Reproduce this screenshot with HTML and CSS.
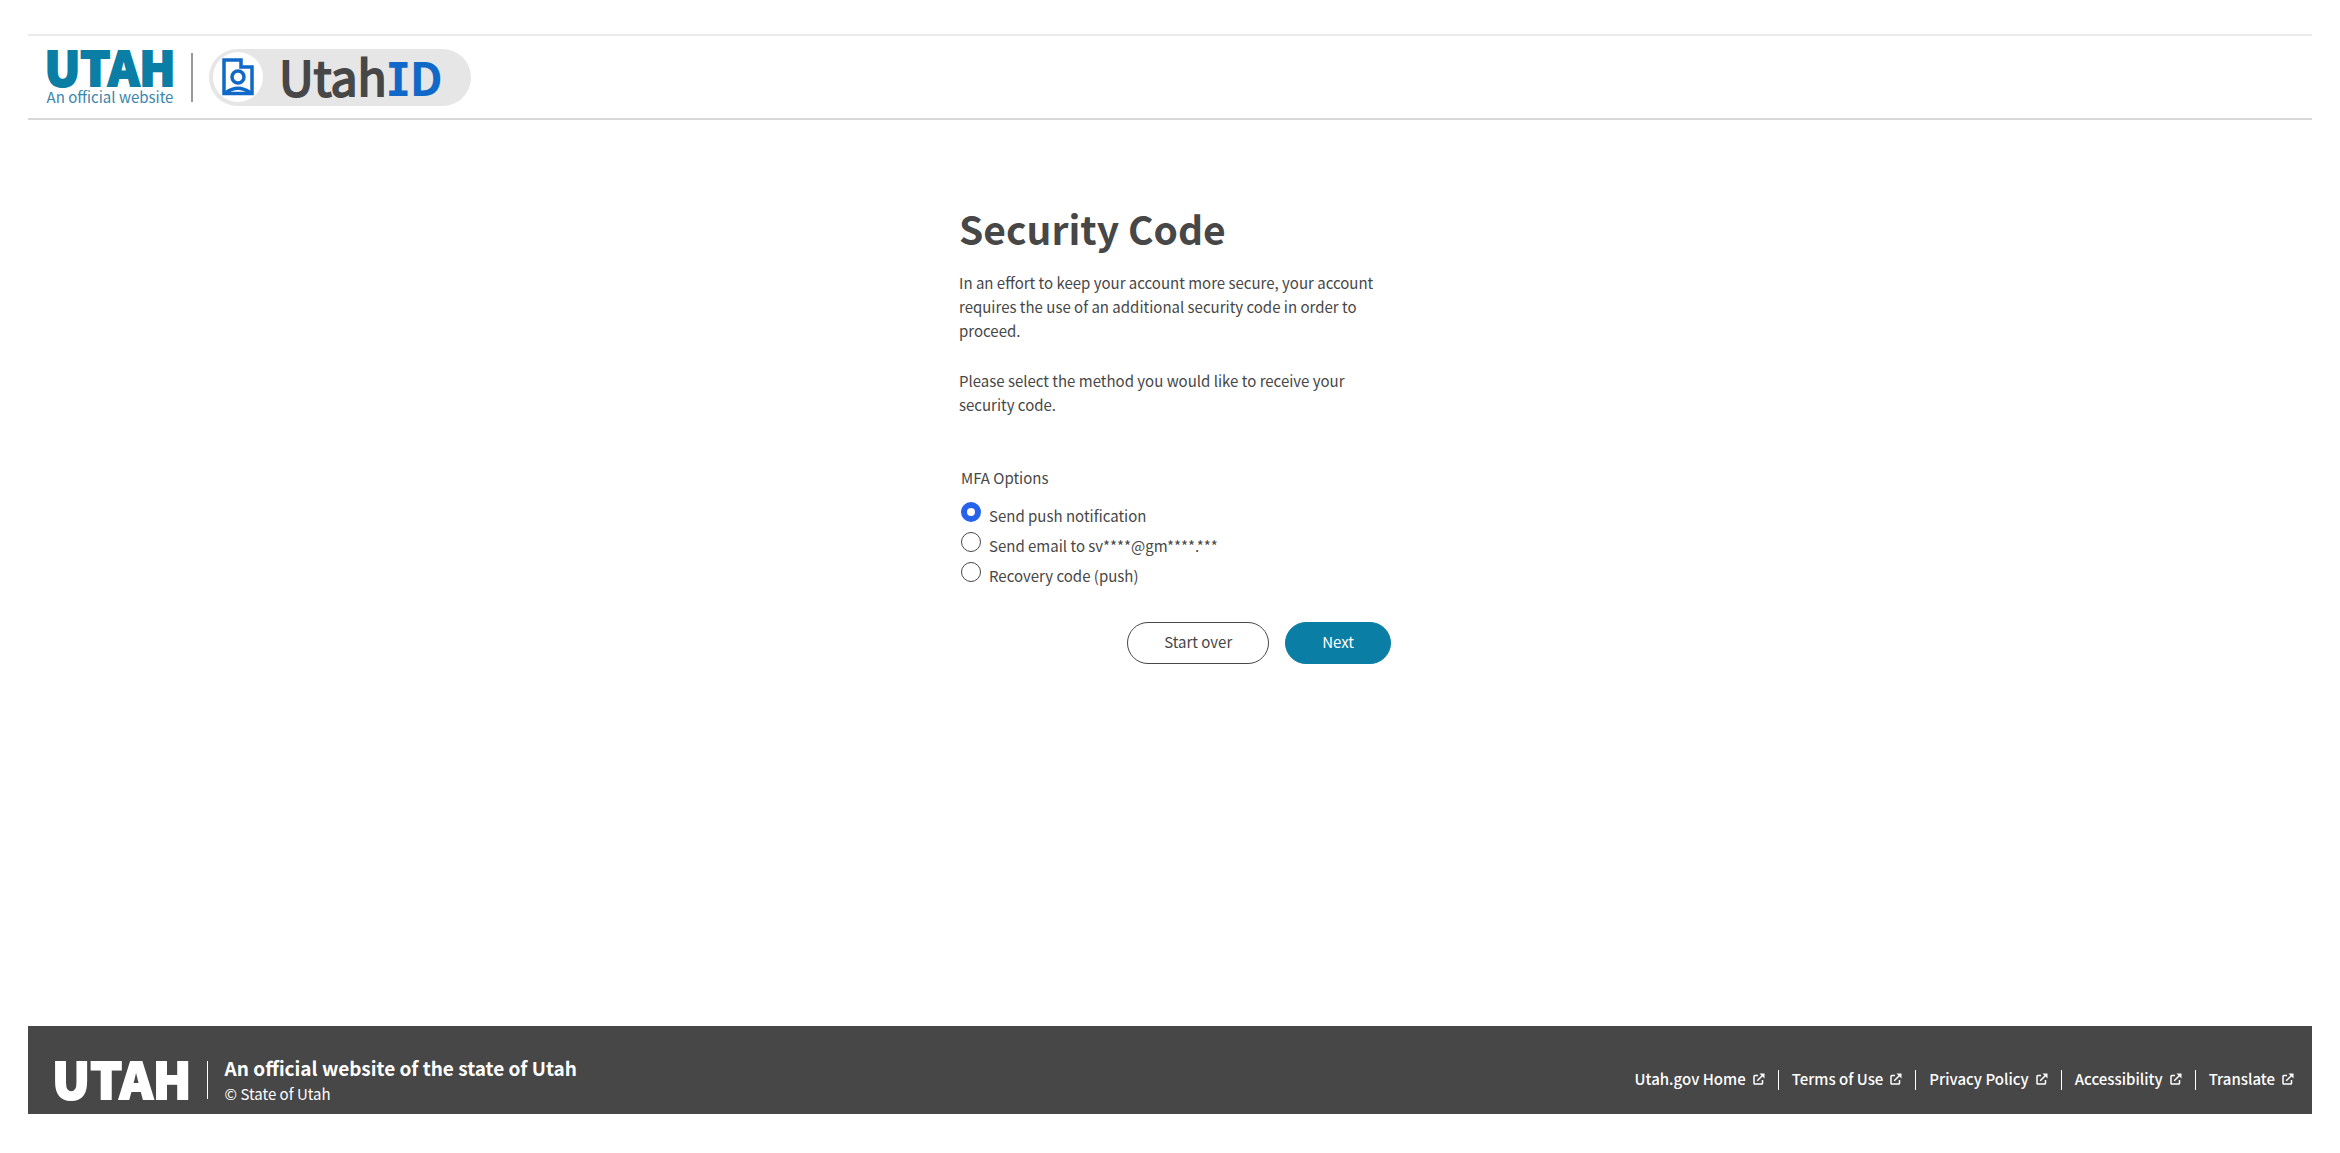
FILE: index.html
```
<!DOCTYPE html>
<html lang="en">
<head>
<meta charset="utf-8">
<meta name="viewport" content="width=device-width, initial-scale=1">
<title>UtahID - Security Code</title>
<link rel="stylesheet" href="styles.css">
</head>
<body>
<svg class="sprite" aria-hidden="true">
  <symbol id="external" viewBox="0 0 12 12">
    <path d="M5 2.500H1.800a.8.8 0 0 0-.8.8v6.900a.8.8 0 0 0 .8.8h6.900a.8.8 0 0 0 .8-.8V7" fill="none" stroke="currentColor" stroke-width="1.500"/>
    <path d="M4.200 7.800 10 2" fill="none" stroke="currentColor" stroke-width="1.500"/>
    <path d="M6.500.5h5v5z" fill="currentColor"/>
  </symbol>
</svg>
<header class="header">
  <a class="official" href="#">
    <span class="wordmark">UTAH</span>
    <span class="tagline">An official website</span>
  </a>
  <span class="header-divider"></span>
  <a class="product" href="#">
    <span class="product-badge">
      <svg width="32" height="38" viewBox="0 0 32 38" fill="none" stroke="#1068c8" stroke-width="3.500">
        <path d="M2 2H19v7h11v26.500H2z"/>
        <circle cx="16" cy="19" r="6"/>
        <path d="M4 34.500q12-8.500 24 0"/>
      </svg>
    </span>
    <span class="product-name">Utah<span class="product-id"><span class="slab">I</span>D</span></span>
  </a>
</header>
<main class="main">
  <form class="form">
    <h1 class="title">Security Code</h1>
    <p class="text">In an effort to keep your account more secure, your account requires the use of an additional security code in order to proceed.</p>
    <p class="text">Please select the method you would like to receive your security code.</p>
    <fieldset class="options">
      <legend class="legend">MFA Options</legend>
      <div class="option"><input class="radio" type="radio" name="mfa" id="push" checked><label for="push">Send push notification</label></div>
      <div class="option"><input class="radio" type="radio" name="mfa" id="email"><label for="email">Send email to sv****@gm****.***</label></div>
      <div class="option"><input class="radio" type="radio" name="mfa" id="recovery"><label for="recovery">Recovery code (push)</label></div>
    </fieldset>
    <div class="actions">
      <button class="button" type="button">Start over</button>
      <button class="button button-primary" type="submit">Next</button>
    </div>
  </form>
</main>
<footer class="footer">
  <div class="footer-brand">
    <span class="wordmark wordmark-footer">UTAH</span>
    <span class="footer-divider"></span>
    <div class="footer-text">
      <p class="footer-title">An official website of the state of Utah</p>
      <p class="copyright">© State of Utah</p>
    </div>
  </div>
  <nav class="links">
    <a class="link" href="#">Utah.gov Home<svg class="link-icon"><use href="#external"/></svg></a>
    <a class="link" href="#">Terms of Use<svg class="link-icon"><use href="#external"/></svg></a>
    <a class="link" href="#">Privacy Policy<svg class="link-icon"><use href="#external"/></svg></a>
    <a class="link" href="#">Accessibility<svg class="link-icon"><use href="#external"/></svg></a>
    <a class="link" href="#">Translate<svg class="link-icon"><use href="#external"/></svg></a>
  </nav>
</footer>
</body>
</html>
```
FILE: styles.css
```
* { box-sizing: border-box; }

body {
  display: flex;
  flex-direction: column;
  min-height: 100vh;
  margin: 0;
  padding: 34px 28px 39px;
  background: #fff;
  color: #474747;
  font-family: "Source Sans Pro", "Noto Sans CJK SC", sans-serif;
  font-size: 15px;
  line-height: 24px;
}

a { color: inherit; text-decoration: none; }
p, h1 { margin: 0; }
.sprite { position: absolute; width: 0; height: 0; }

.header {
  display: flex;
  align-items: center;
  height: 86px;
  padding: 0 18px;
  border-top: 2px solid #ebebeb;
  border-bottom: 2px solid #d8d8d8;
}
.official {
  display: flex;
  flex-direction: column;
  align-items: center;
  width: 128px;
  padding-top: 2px;
  color: #0a7ea4;
}
.wordmark {
  font-size: 47px;
  font-weight: 900;
  line-height: 38px;
  -webkit-text-stroke: 2px currentColor;
}
.tagline { color: #3b86aa; line-height: 24px; white-space: nowrap; }
.header-divider { width: 2px; height: 49px; margin: 0 16px 0 17px; background: #999; }
.product {
  display: flex;
  align-items: center;
  height: 57px;
  padding: 0 28px 0 4px;
  border-radius: 29px;
  background: #e6e6e6;
}
.product-badge {
  display: flex;
  align-items: center;
  justify-content: center;
  width: 50px;
  height: 50px;
  margin-right: 16px;
  border-radius: 50%;
  background: #fff;
}
.product-name {
  padding-bottom: 4px;
  font-size: 48px;
  line-height: 56px;
  -webkit-text-stroke: 2px currentColor;
}
.product-id {
  color: #1068c8;
  font-size: 46px;
  font-weight: 700;
  -webkit-text-stroke: 0;
}
.slab { font-family: "Noto Sans Mono CJK SC", "DejaVu Sans Mono", monospace; }

.main { flex: 1; display: flex; justify-content: center; }
.form { width: 442px; padding: 80px 0 40px 10px; }
.title { margin-bottom: 15px; font-size: 39px; font-weight: 700; line-height: 56px; }
.text { margin-bottom: 26px; }
.options { margin: 49px 0 0; padding: 0 0 0 2px; border: 0; }
.legend { margin-bottom: 12px; padding: 0; }
.option { display: flex; align-items: flex-start; gap: 8px; height: 30px; }
.option label { padding-top: 2px; }
.radio {
  width: 20px;
  height: 20px;
  margin: 0;
  appearance: none;
  border: 1px solid #474747;
  border-radius: 50%;
  background: #fff;
}
.radio:checked { border: 6px solid #2563eb; }
.actions { display: flex; justify-content: flex-end; gap: 16px; margin-top: 30px; }
.button {
  height: 42px;
  padding: 0 36px 2px;
  border: 1px solid #474747;
  border-radius: 21px;
  background: #fff;
  color: #474747;
  font: inherit;
}
.button-primary { border-color: #0a7ea4; background: #0a7ea4; color: #fff; }

.footer {
  display: flex;
  align-items: center;
  justify-content: space-between;
  height: 88px;
  padding: 20px 18px 0 24px;
  background: #474747;
  color: #fff;
}
.footer-brand { display: flex; align-items: center; }
.wordmark-footer { padding-bottom: 6px; font-size: 50px; }
.footer-divider { width: 1px; height: 38px; margin: 0 17px 0 15px; background: #fff; }
.footer-title { font-size: 19px; font-weight: 700; line-height: 28px; }
.links { display: flex; align-items: center; font-weight: 500; }
.link {
  display: flex;
  align-items: center;
  gap: 7px;
  height: 20px;
  padding: 0 13px 2px;
  border-left: 1px solid #fff;
}
.link:first-child { border-left: 0; }
.link:last-child { padding-right: 0; }
.link-icon { width: 12px; height: 12px; }
```
